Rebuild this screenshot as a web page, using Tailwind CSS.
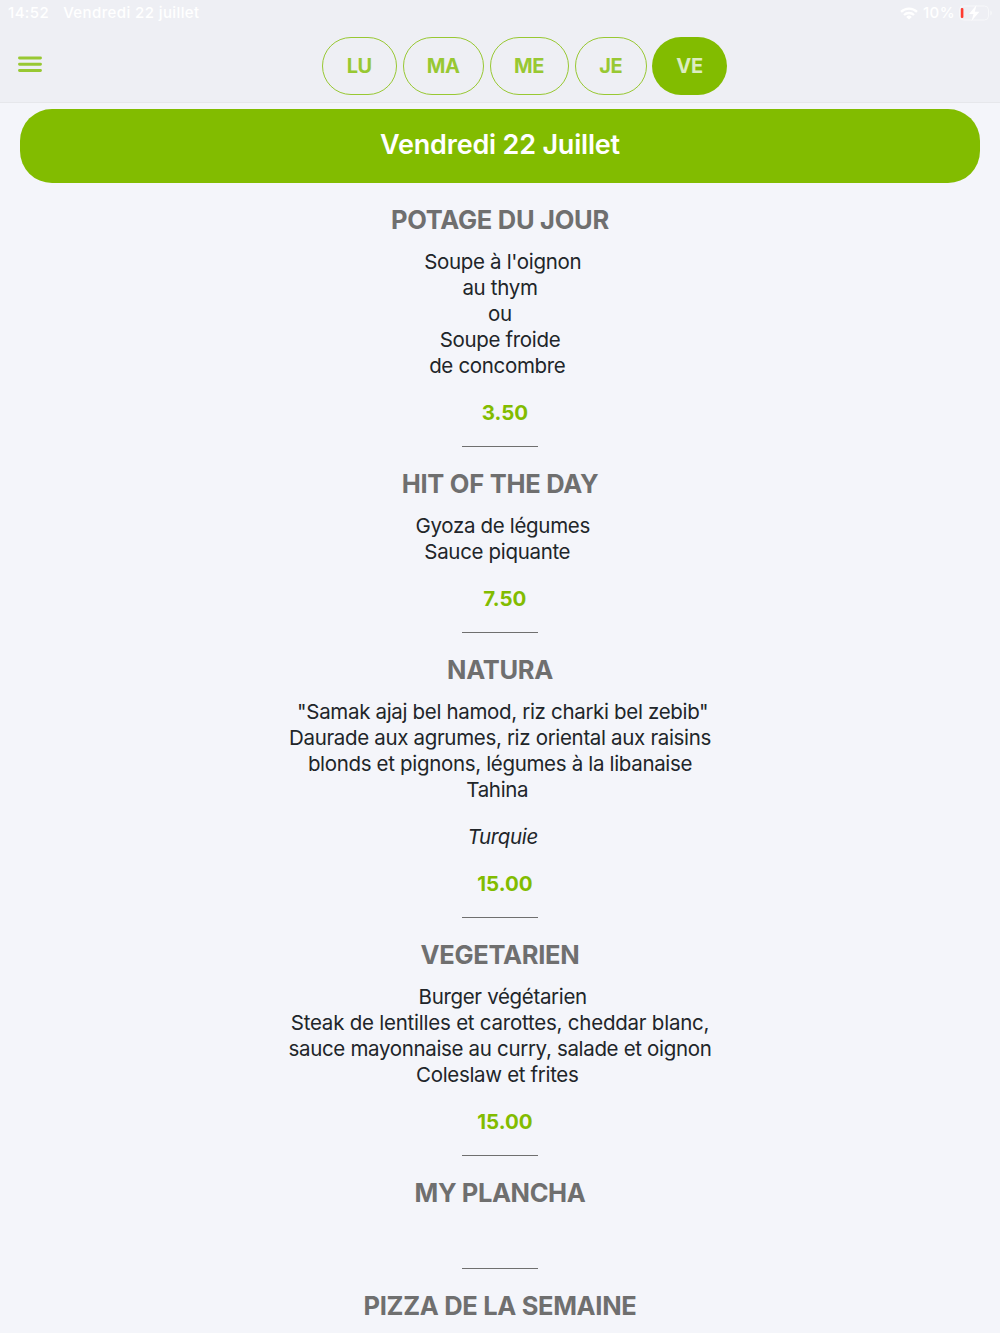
<!DOCTYPE html>
<html lang="fr">
  <head>
    <meta charset="UTF-8" />
    <meta name="viewport" content="width=device-width, initial-scale=1.0" />
    <title>Menu du jour</title>
    <script src="https://cdn.jsdelivr.net/npm/@tailwindcss/browser@4"></script>
  </head>
  <body class="bg-[#f4f5fa] font-['Inter','Liberation_Sans',sans-serif] text-[#212529] h-[1333px] overflow-hidden">
    <header class="h-[103px] bg-[#eeeff4] border-b border-[#e6e7eb]">
      <!-- Status bar -->
      <div class="flex items-center justify-between h-[26px] pl-[8px] pr-[7px] text-[15px] font-medium tracking-[0.4px] text-white">
        <div class="flex gap-[14px]">
          <span>14:52</span>
          <span>Vendredi 22 juillet</span>
        </div>
        <div class="flex items-center">
          <svg class="w-[18px] h-[13px] mr-[5px]" viewBox="0 0 18 13" fill="none" stroke="currentColor" stroke-width="2.3">
            <path d="M1 4.8a11.5 11.5 0 0 1 16 0" />
            <path d="M4 8a7.2 7.2 0 0 1 10 0" />
            <path d="M9 12.6 6.2 9.9a4 4 0 0 1 5.6 0z" fill="currentColor" stroke="none" />
          </svg>
          <span class="mr-[4px]">10%</span>
          <svg class="w-[34px] h-[16px]" viewBox="0 0 34 16" fill="none">
            <rect x="0.5" y="1" width="29" height="14" rx="4" stroke="#f7f8fa" />
            <rect x="1.8" y="3" width="2.6" height="10" rx="1" fill="#ff3b30" />
            <path d="M31.3 5.5c2 .8 2 4.2 0 5z" fill="#f7f8fa" />
            <path d="M17.5 0 10 9h4.5L12.5 16 20.5 6.8h-4.7z" fill="white" />
          </svg>
        </div>
      </div>
      <div class="flex pt-[11px] pl-[18px]">
        <button class="mt-[19px] h-[17px] mr-[279.5px]" aria-label="Menu">
          <svg class="w-[24px] h-[17px]" viewBox="0 0 24 17" stroke="#98c832" stroke-width="2.9" stroke-linecap="round">
            <path d="M1.5 2h21M1.5 8.3h21M1.5 14.5h21" />
          </svg>
        </button>
        <nav class="flex gap-[6px] h-[58px] text-[20px] font-bold tracking-[-0.4px] text-[#98c832]">
          <button class="w-[75.5px] border border-[#98c832] rounded-full">LU</button>
          <button class="w-[80.5px] border border-[#98c832] rounded-full">MA</button>
          <button class="w-[79px] border border-[#98c832] rounded-full">ME</button>
          <button class="w-[72.5px] border border-[#98c832] rounded-full">JE</button>
          <button class="w-[75px] -ml-px bg-[#82bc00] text-[#dcecc0] rounded-full">VE</button>
        </nav>
      </div>
    </header>

    <main class="pt-[6px] px-[20px] text-center">
      <h1 class="h-[74px] pt-[18px] rounded-[32px] bg-[#82bc00] text-white text-[27px] leading-[36px] font-semibold tracking-[-0.2px]">Vendredi 22 Juillet</h1>

      <div class="pt-[21px] text-[20.5px] leading-[26px] tracking-[-0.33px] whitespace-nowrap">
        <section>
          <h2 class="mb-[13px] text-[25.5px] leading-[32px] font-bold tracking-[-0.28px] text-[#6f6f6f]">POTAGE DU JOUR</h2>
          <p>&nbsp;Soupe à l'oignon<br />au thym<br />ou<br />Soupe froide<br />de concombre&nbsp;</p>
          <p class="mt-[21px] font-bold tracking-normal text-[#82bc00]">&nbsp;&nbsp;3.50</p>
          <hr class="w-[76px] mx-auto mt-[20px] mb-[21px] border-[#6f6f6f]" />
        </section>
        <section>
          <h2 class="mb-[13px] text-[25.5px] leading-[32px] font-bold tracking-[-0.28px] text-[#6f6f6f]">HIT OF THE DAY</h2>
          <p>&nbsp;Gyoza de légumes<br />Sauce piquante&nbsp;</p>
          <p class="mt-[21px] font-bold tracking-normal text-[#82bc00]">&nbsp;&nbsp;7.50</p>
          <hr class="w-[76px] mx-auto mt-[20px] mb-[21px] border-[#6f6f6f]" />
        </section>
        <section>
          <h2 class="mb-[13px] text-[25.5px] leading-[32px] font-bold tracking-[-0.28px] text-[#6f6f6f]">NATURA</h2>
          <p>&nbsp;"Samak ajaj bel hamod, riz charki bel zebib"<br />Daurade aux agrumes, riz oriental aux raisins<br />blonds et pignons, légumes à la libanaise<br />Tahina&nbsp;</p>
          <p class="mt-[21px] italic">&nbsp;Turquie</p>
          <p class="mt-[21px] font-bold tracking-normal text-[#82bc00]">&nbsp;&nbsp;15.00</p>
          <hr class="w-[76px] mx-auto mt-[20px] mb-[21px] border-[#6f6f6f]" />
        </section>
        <section>
          <h2 class="mb-[13px] text-[25.5px] leading-[32px] font-bold tracking-[-0.28px] text-[#6f6f6f]">VEGETARIEN</h2>
          <p>&nbsp;Burger végétarien<br /><span class="tracking-[-0.23px]">Steak de lentilles et carottes, cheddar blanc,</span><br />sauce mayonnaise au curry, salade et oignon<br />Coleslaw et frites&nbsp;</p>
          <p class="mt-[21px] font-bold tracking-normal text-[#82bc00]">&nbsp;&nbsp;15.00</p>
          <hr class="w-[76px] mx-auto mt-[20px] mb-[21px] border-[#6f6f6f]" />
        </section>
        <section>
          <h2 class="text-[25.5px] leading-[32px] font-bold tracking-[-0.4px] text-[#6f6f6f]">MY PLANCHA</h2>
          <hr class="w-[76px] mx-auto mt-[59px] mb-[21px] border-[#6f6f6f]" />
        </section>
        <section>
          <h2 class="text-[25.5px] leading-[32px] font-bold tracking-[-0.33px] text-[#6f6f6f]">PIZZA DE LA SEMAINE</h2>
        </section>
      </div>
    </main>
  </body>
</html>
